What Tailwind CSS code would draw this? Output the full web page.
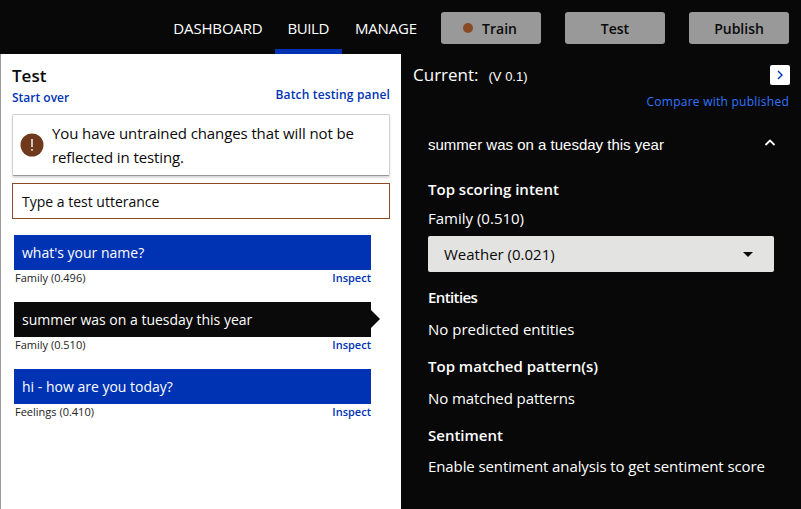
<!DOCTYPE html>
<html lang="en">
<head>
  <meta charset="UTF-8" />
  <title>Test panel</title>
  <script src="https://cdn.jsdelivr.net/npm/@tailwindcss/browser@4"></script>
</head>
<body class="bg-[#080808] font-['Open_Sans','Noto_Sans',sans-serif] overflow-hidden">
  <div class="w-[801px] h-[509px] flex flex-col overflow-hidden">

    <!-- Top bar -->
    <header class="h-[54px] shrink-0 flex items-start justify-end pr-3 pt-3">
      <nav class="flex text-white text-[15px] font-medium tracking-[-0.15px] h-[42px]">
        <a class="mr-[25px] h-8 flex items-center">DASHBOARD</a>
        <a class="mr-[13px] px-[13px] -ml-[13px] h-[42px] pb-[10px] flex items-center border-b-[5px] border-[#0033b4] tracking-[-0.45px]"><span class="mt-[5px]">BUILD</span></a>
        <a class="mr-6 h-8 flex items-center">MANAGE</a>
      </nav>
      <div class="flex gap-6 text-[#0a0a0a] text-[14px] font-semibold">
        <button class="w-[100px] h-8 rounded-[3px] bg-[#999999] flex items-center justify-center gap-[9px] pr-[2px]"><span class="w-[10px] h-[10px] rounded-full bg-[#8a4a25]"></span>Train</button>
        <button class="w-[100px] h-8 rounded-[3px] bg-[#999999]">Test</button>
        <button class="w-[100px] h-8 rounded-[3px] bg-[#999999]">Publish</button>
      </div>
    </header>

    <div class="flex flex-1 min-h-0">
      <!-- Left test panel -->
      <section class="w-[401px] shrink-0 bg-white border-l border-[#999999] pl-[11px] pr-[11px] pt-3 text-[#0a0a0a]">
        <h1 class="text-[17px] leading-[20px] font-semibold">Test</h1>
        <div class="flex justify-between items-start h-[19px] text-[12px] font-semibold text-[#0033b4] -mt-px">
          <a class="mt-[4px]">Start over</a>
          <a class="mt-[1px] tracking-[0.15px]">Batch testing panel</a>
        </div>
        <div class="mt-[10px] h-[62px] flex items-center gap-2 pl-[7px] pr-3 rounded-[2px] border border-[#d0d0d0] border-b-[#999999] shadow-[0_2px_2px_rgba(0,0,0,0.15)]">
          <svg class="w-6 h-6 shrink-0" viewBox="0 0 24 24">
            <circle cx="12" cy="12" r="11.5" fill="#6f3a1c" />
            <rect x="11.3" y="6" width="1.4" height="8" fill="#fff" />
            <rect x="11.3" y="16" width="1.4" height="1.8" fill="#fff" />
          </svg>
          <p class="text-[15px] leading-6 tracking-[-0.1px]">You have untrained changes that will not be reflected in testing.</p>
        </div>
        <div class="mt-[7px] h-[36px] flex items-center border border-[#8a4a25] px-[9px] text-[14px]">Type a test utterance</div>

        <ul class="mt-4 ml-[2px] w-[357px]">
          <li class="mb-[16px]">
            <div class="h-[35px] bg-[#0033b4] text-white text-[14px] flex items-center px-2">what's your name?</div>
            <div class="flex justify-between items-center h-[16px] text-[11px]"><span class="ml-px text-[#222222]">Family (0.496)</span><a class="font-semibold text-[#0033b4]">Inspect</a></div>
          </li>
          <li class="mb-[16px]">
            <div class="relative h-[35px] bg-[#0a0a0a] text-white text-[14px] flex items-center px-2">summer was on a tuesday this year
              <span class="absolute left-full top-[8px] border-y-[9px] border-y-transparent border-l-[9px] border-l-[#0a0a0a]"></span>
            </div>
            <div class="flex justify-between items-center h-[16px] text-[11px]"><span class="ml-px text-[#222222]">Family (0.510)</span><a class="font-semibold text-[#0033b4]">Inspect</a></div>
          </li>
          <li>
            <div class="h-[35px] bg-[#0033b4] text-white text-[14px] flex items-center px-2">hi - how are you today?</div>
            <div class="flex justify-between items-center h-[16px] text-[11px]"><span class="ml-px text-[#222222]">Feelings (0.410)</span><a class="font-semibold text-[#0033b4]">Inspect</a></div>
          </li>
        </ul>
      </section>

      <!-- Right details panel -->
      <section class="flex-1 min-w-0 pl-3 pr-[11px] pt-[11px] text-white">
        <div class="flex items-center justify-between h-[20px]">
          <div class="flex items-baseline"><span class="text-[17px] font-medium">Current:</span><span class="ml-[10px] text-[13px] font-['Liberation_Sans',sans-serif]">(V 0.1)</span></div>
          <button class="w-5 h-5 rounded-[2px] bg-white flex items-center justify-center">
            <svg class="w-[10px] h-[10px]" viewBox="0 0 10 10" fill="none" stroke="#0033b4" stroke-width="1.4"><path d="M3 1 L7 5 L3 9" /></svg>
          </button>
        </div>
        <div class="mt-[9px] pr-px text-right text-[12px] text-[#2f74ff] tracking-[0.25px] h-4 leading-4">Compare with published</div>

        <div class="pl-[15px] pr-4">
          <div class="mt-[25px] flex items-center justify-between h-5">
            <span class="text-[15px] font-['Liberation_Sans',sans-serif]">summer was on a tuesday this year</span>
            <svg class="w-3 h-3 -mt-1 mr-[-2px]" viewBox="0 0 12 12" fill="none" stroke="#fff" stroke-width="1.8"><path d="M1.5 8 L6 3.5 L10.5 8" /></svg>
          </div>

          <h2 class="mt-6 text-[15px] leading-5 font-semibold">Top scoring intent</h2>
          <p class="mt-[9px] text-[15px] leading-5">Family (0.510)</p>
          <button class="mt-2 w-[346px] h-9 rounded-[2px] bg-[#e3e4e2] text-[#0a0a0a] flex items-center justify-between pl-4 pr-[21px] text-[15px]">
            <span>Weather (0.021)</span>
            <span class="border-x-[5px] border-x-transparent border-t-[5px] border-t-[#0a0a0a]"></span>
          </button>

          <h2 class="mt-[15px] text-[15px] leading-5 font-semibold tracking-[-0.6px]">Entities</h2>
          <p class="mt-3 text-[15px] leading-5">No predicted entities</p>

          <h2 class="mt-[17px] text-[15px] leading-5 font-semibold">Top matched pattern(s)</h2>
          <p class="mt-3 text-[15px] leading-5 tracking-[-0.1px]">No matched patterns</p>

          <h2 class="mt-[17px] text-[15px] leading-5 font-semibold">Sentiment</h2>
          <p class="mt-[11px] text-[15px] leading-5 tracking-[-0.1px] whitespace-nowrap">Enable sentiment analysis to get sentiment score</p>
        </div>
      </section>
    </div>
  </div>
</body>
</html>
